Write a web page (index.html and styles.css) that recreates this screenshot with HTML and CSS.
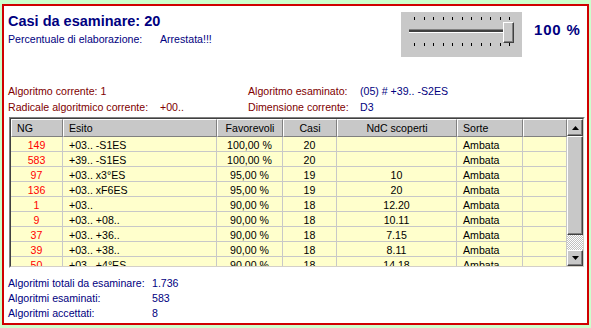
FILE: index.html
```html
<!DOCTYPE html>
<html lang="it">
<head>
  <meta charset="UTF-8">
  <title>Elaborazione algoritmi</title>
  <link rel="stylesheet" href="styles.css">
</head>
<body>

  <div class="frame">

    <div class="top">
      <div class="status">
        <h1 class="title">Casi da esaminare: 20</h1>
        <div class="pair">
          <span>Percentuale di elaborazione:</span>
          <span>Arrestata!!!</span>
        </div>
      </div>

      <div class="slider">
        <div class="ticks"><i></i><i></i><i></i><i></i><i></i><i></i><i></i><i></i><i></i><i></i><i></i></div>
        <div class="track"></div>
        <div class="ticks low"><i></i><i></i><i></i><i></i><i></i><i></i><i></i><i></i><i></i><i></i><i></i></div>
        <div class="thumb"></div>
      </div>

      <div class="percent">100 %</div>
    </div>

    <div class="info">
      <span>Algoritmo corrente: 1</span>
      <span></span>
      <span>Algoritmo esaminato:</span>
      <span class="value">(05) # +39.. -S2ES</span>
      <span>Radicale algoritmico corrente:</span>
      <span>+00..</span>
      <span>Dimensione corrente:</span>
      <span class="value">D3</span>
    </div>

    <div class="grid-box">
      <div class="grid-inner">
        <div class="table">
          <div class="head">
            <span>NG</span>
            <span>Esito</span>
            <span class="c">Favorevoli</span>
            <span class="c">Casi</span>
            <span class="c">NdC scoperti</span>
            <span>Sorte</span>
            <span></span>
          </div>
          <div class="rows">
            <div class="row"><span class="n">149</span><span>+03.. -S1ES</span><span class="c">100,00 %</span><span class="c">20</span><span class="c"></span><span>Ambata</span><span></span></div>
            <div class="row"><span class="n">583</span><span>+39.. -S1ES</span><span class="c">100,00 %</span><span class="c">20</span><span class="c"></span><span>Ambata</span><span></span></div>
            <div class="row"><span class="n">97</span><span>+03.. x3°ES</span><span class="c">95,00 %</span><span class="c">19</span><span class="c">10</span><span>Ambata</span><span></span></div>
            <div class="row"><span class="n">136</span><span>+03.. xF6ES</span><span class="c">95,00 %</span><span class="c">19</span><span class="c">20</span><span>Ambata</span><span></span></div>
            <div class="row"><span class="n">1</span><span>+03..</span><span class="c">90,00 %</span><span class="c">18</span><span class="c">12.20</span><span>Ambata</span><span></span></div>
            <div class="row"><span class="n">9</span><span>+03.. +08..</span><span class="c">90,00 %</span><span class="c">18</span><span class="c">10.11</span><span>Ambata</span><span></span></div>
            <div class="row"><span class="n">37</span><span>+03.. +36..</span><span class="c">90,00 %</span><span class="c">18</span><span class="c">7.15</span><span>Ambata</span><span></span></div>
            <div class="row"><span class="n">39</span><span>+03.. +38..</span><span class="c">90,00 %</span><span class="c">18</span><span class="c">8.11</span><span>Ambata</span><span></span></div>
            <div class="row"><span class="n">50</span><span>+03.. +4°ES</span><span class="c">90,00 %</span><span class="c">18</span><span class="c">14.18</span><span>Ambata</span><span></span></div>
          </div>
        </div>

        <div class="scroll">
          <div class="btn up">
            <svg width="7" height="4" viewBox="0 0 7 4"><polygon points="3.5,0 7,4 0,4" fill="#000"/></svg>
          </div>
          <div class="scroll-thumb"></div>
          <div class="scroll-track"></div>
          <div class="btn down">
            <svg width="7" height="4" viewBox="0 0 7 4"><polygon points="0,0 7,0 3.5,4" fill="#000"/></svg>
          </div>
        </div>
      </div>
    </div>

    <div class="totals">
      <span>Algoritmi totali da esaminare:</span><span>1.736</span>
      <span>Algoritmi esaminati:</span><span>583</span>
      <span>Algoritmi accettati:</span><span>8</span>
    </div>

  </div>

</body>
</html>
```

FILE: styles.css
```css
* {
  margin: 0;
  padding: 0;
  box-sizing: border-box;
}

body {
  background-color: #ccffcc;
  font-family: "Liberation Sans", Arial, sans-serif;
  font-size: 10.6px;
  color: #000080;
}

.frame {
  margin: 4px 0 0 2px;
  width: 587px;
  height: 321px;
  border: 2px solid #d00000;
  background-color: #fff;
  padding: 6px 0 0 4px;
}

/* Header with status and slider */
.top {
  display: flex;
  align-items: flex-start;
  height: 45px;
}

.status {
  flex: 1;
}

.title {
  font-size: 14.5px;
  font-weight: bold;
  line-height: 18px;
}

.pair {
  display: grid;
  grid-template-columns: 152px auto;
  margin-top: 2px;
  line-height: 14px;
}

.slider {
  position: relative;
  width: 121px;
  height: 45px;
  margin-right: 12px;
  padding: 5px 0 0 13px;
  background-color: #c8c8c8;
}

.ticks {
  display: flex;
  justify-content: space-between;
  width: 96px;
  height: 3px;
}

.ticks i {
  width: 1px;
  background-color: #000;
}

.ticks.low {
  margin-top: 10px;
}

.track {
  width: 100px;
  height: 4px;
  margin: 9px 0 0 -5px;
  background-color: #404040;
  border-top: 1px solid #808080;
  border-bottom: 1px solid #fff;
}

.thumb {
  position: absolute;
  left: 102px;
  top: 10px;
  width: 11px;
  height: 21px;
  background-color: #c8c8c8;
  border: 1px solid;
  border-color: #fff #404040 #404040 #fff;
  box-shadow: inset -1px -1px #808080;
}

.percent {
  width: 53px;
  margin-top: 9px;
  font-size: 15px;
  font-weight: bold;
  line-height: 18px;
  letter-spacing: 0.8px;
}

/* Current algorithm info */
.info {
  display: grid;
  grid-template-columns: 152px 88px 112px auto;
  margin-top: 26px;
  line-height: 16px;
  color: #800000;
}

.info .value {
  color: #000080;
}

/* Results grid */
.grid-box {
  width: 576px;
  height: 151px;
  margin: 2px 0 0 1px;
  border: 1px solid;
  border-color: #808080 #fff #fff #808080;
}

.grid-inner {
  display: flex;
  height: 149px;
  border: 1px solid;
  border-color: #404040 #d4d0c8 #d4d0c8 #404040;
}

.table {
  width: 556px;
  color: #000;
}

.head,
.row {
  display: grid;
  grid-template-columns: 52px 154px 66px 54px 120px 66px 44px;
}

.head {
  height: 18px;
}

.head span {
  background-color: #c8c8c8;
  border: 1px solid;
  border-color: #fff #808080 #808080 #fff;
  padding-left: 5px;
  line-height: 16px;
}

.head span.c {
  padding-left: 0;
  text-align: center;
}

.rows {
  height: 129px;
  overflow: hidden;
  background-color: #ffffcc;
}

.row {
  height: 15px;
}

.row span {
  border-right: 1px solid #c8c8c8;
  border-bottom: 1px solid #c8c8c8;
  padding: 3px 0 0 6px;
  line-height: 11px;
  white-space: nowrap;
}

.row span.c,
.row span.n {
  padding-left: 0;
  text-align: center;
}

.row span.n {
  color: #ff0000;
}

/* Scrollbar */
.scroll {
  display: flex;
  flex-direction: column;
  width: 16px;
}

.btn,
.scroll-thumb {
  background-color: #c8c8c8;
  border: 1px solid;
  border-color: #fff #404040 #404040 #fff;
  box-shadow: inset -1px -1px #808080;
}

.btn {
  display: flex;
  align-items: center;
  justify-content: center;
}

.btn.up {
  height: 17px;
}

.btn.down {
  height: 16px;
}

.scroll-thumb {
  height: 99px;
}

.scroll-track {
  height: 15px;
  background: repeating-conic-gradient(#c0c0c0 0 25%, #fff 0 50%) 0 0 / 2px 2px;
}

/* Totals */
.totals {
  display: grid;
  grid-template-columns: 144px auto;
  margin-top: 8px;
  line-height: 15px;
}
```
